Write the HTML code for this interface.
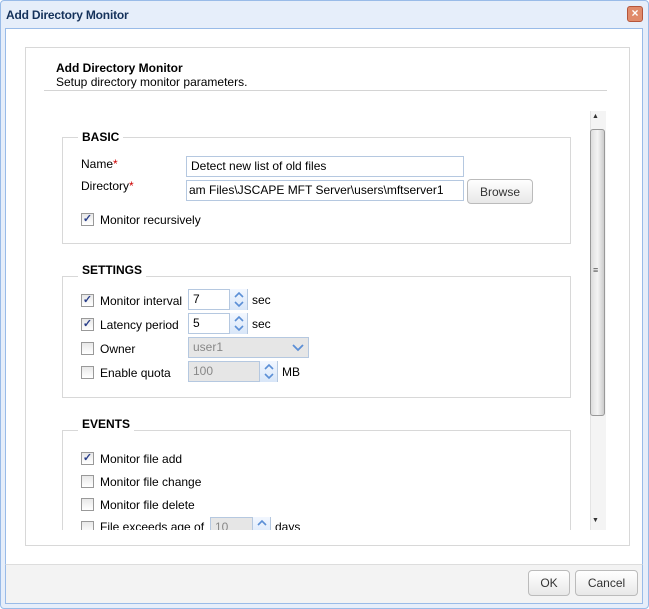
<!DOCTYPE html>
<html><head><style>
*{box-sizing:border-box;margin:0;padding:0}
body{width:649px;height:609px;font-family:"Liberation Sans",Arial,sans-serif;font-size:12px;color:#000;background:#fff;position:relative;overflow:hidden}
.win{position:absolute;left:0;top:0;width:649px;height:609px;background:#e6eefa;border:1px solid #99bbe8;border-radius:4px}
.title{position:absolute;left:6px;top:8px;font-weight:bold;font-size:12px;color:#15325b;letter-spacing:-0.2px}
.close{position:absolute;left:627px;top:6px;width:16px;height:16px;background:#e08a6a;border:1px solid #b5553a;border-radius:3px;color:#fff;font-size:12px;line-height:13px;text-align:center;font-weight:bold}
.body{position:absolute;left:5px;top:28px;width:638px;height:536px;background:#fff;border:1px solid #99bbe8;border-bottom:none}
.foot{position:absolute;left:5px;top:564px;width:638px;height:40px;background:#f3f3f3;border:1px solid #99bbe8;border-top:1px solid #ddd}
.btn{position:absolute;height:26px;border:1px solid #bbb;border-radius:4px;background:linear-gradient(#fff,#e8e8e8);text-align:center;line-height:24px;font-size:12px;color:#333}
.panel{position:absolute;left:25px;top:47px;width:605px;height:499px;border:1px solid #d8d8d8}
.abs{position:absolute}
.hline{position:absolute;left:44px;top:90px;width:563px;height:1px;background:#d4d4d4}
.fs{position:absolute;left:62px;width:509px;border:1px solid #d8d8d8}
.leg{position:absolute;background:#fff;font-weight:bold;padding:0 4px;left:78px}
.cb{position:absolute;width:13px;height:13px;border:1px solid #999;background:linear-gradient(#e8e8e8,#fff);font-size:11px;line-height:11px;text-align:center;color:#2a3f8a;font-weight:bold}
.inp{position:absolute;height:21px;border:1px solid #b5c8e0;background:#fff;padding:2px 4px;font-size:12px;white-space:nowrap;overflow:hidden}
.dis{background:#e6e6e6;color:#888}
.spin{position:absolute;width:18px;height:21px;background:linear-gradient(#f2f7ff,#d8e6f8);border-left:1px solid #b5c8e0}
.lbl{position:absolute;white-space:nowrap}
</style></head><body>
<div class="win"></div>
<div class="title">Add Directory Monitor</div>
<div class="close">×</div>
<div class="body"></div>
<div class="foot"></div>
<div class="btn" style="left:528px;top:570px;width:42px">OK</div>
<div class="btn" style="left:575px;top:570px;width:63px">Cancel</div>
<div class="panel"></div>
<div class="lbl" style="left:56px;top:61px;font-weight:bold">Add Directory Monitor</div>
<div class="lbl" style="left:56px;top:75px">Setup directory monitor parameters.</div>
<div class="hline"></div>
<div class="abs" style="left:590px;top:111px;width:16px;height:419px;background:#f4f4f4;border-left:1px solid #e4e4e4"></div>
<div class="abs" style="left:592px;top:113px;font-size:7px;color:#333">▲</div>
<div class="abs" style="left:590px;top:129px;width:15px;height:287px;border:1px solid #999;border-radius:3px;background:linear-gradient(90deg,#ddd,#f4f4f4,#ccc)"></div>
<div class="abs" style="left:593px;top:265px;font-size:9px;color:#555">≡</div>
<div class="abs" style="left:592px;top:517px;font-size:7px;color:#333">▼</div>
<div class="fs" style="top:137px;height:107px"></div>
<div class="leg" style="top:130px">BASIC</div>
<div class="lbl" style="left:81px;top:157px">Name<span style="color:#c00">*</span></div>
<div class="inp" style="left:186px;top:156px;width:278px">Detect new list of old files</div>
<div class="lbl" style="left:81px;top:179px">Directory<span style="color:#c00">*</span></div>
<div class="inp" style="left:186px;top:180px;width:278px;text-indent:-2px">am Files\JSCAPE MFT Server\users\mftserver1</div>
<div class="btn" style="left:467px;top:179px;width:66px;height:25px;color:#333">Browse</div>
<div class="cb" style="left:81px;top:213px">✓</div>
<div class="lbl" style="left:100px;top:213px">Monitor recursively</div>
<div class="fs" style="top:276px;height:122px"></div>
<div class="leg" style="top:263px">SETTINGS</div>
<div class="cb" style="left:81px;top:294px">✓</div>
<div class="lbl" style="left:100px;top:294px">Monitor interval</div>
<div class="inp" style="left:188px;top:289px;width:60px">7</div>
<div class="spin" style="left:229px;top:289px"><svg width="18" height="21"><path d="M5 8l4-4 4 4M5 13l4 4 4-4" stroke="#5b8fd6" stroke-width="1.6" fill="none"/></svg></div>
<div class="lbl" style="left:252px;top:293px">sec</div>
<div class="cb" style="left:81px;top:318px">✓</div>
<div class="lbl" style="left:100px;top:318px">Latency period</div>
<div class="inp" style="left:188px;top:313px;width:60px">5</div>
<div class="spin" style="left:229px;top:313px"><svg width="18" height="21"><path d="M5 8l4-4 4 4M5 13l4 4 4-4" stroke="#5b8fd6" stroke-width="1.6" fill="none"/></svg></div>
<div class="lbl" style="left:252px;top:317px">sec</div>
<div class="cb" style="left:81px;top:342px"></div>
<div class="lbl" style="left:100px;top:342px">Owner</div>
<div class="inp dis" style="left:188px;top:337px;width:121px">user1</div>
<div class="abs" style="left:289px;top:338px"><svg width="18" height="20"><path d="M4 7l5 5 5-5" stroke="#5b8fd6" stroke-width="1.8" fill="none"/></svg></div>
<div class="cb" style="left:81px;top:366px"></div>
<div class="lbl" style="left:100px;top:366px">Enable quota</div>
<div class="inp dis" style="left:188px;top:361px;width:90px">100</div>
<div class="spin" style="left:259px;top:361px"><svg width="18" height="21"><path d="M5 8l4-4 4 4M5 13l4 4 4-4" stroke="#5b8fd6" stroke-width="1.6" fill="none"/></svg></div>
<div class="lbl" style="left:282px;top:365px">MB</div>
<div class="fs" style="top:430px;height:100px;border-bottom:none"></div>
<div class="leg" style="top:417px">EVENTS</div>
<div class="cb" style="left:81px;top:452px">✓</div>
<div class="lbl" style="left:100px;top:452px">Monitor file add</div>
<div class="cb" style="left:81px;top:475px"></div>
<div class="lbl" style="left:100px;top:475px">Monitor file change</div>
<div class="cb" style="left:81px;top:498px"></div>
<div class="lbl" style="left:100px;top:498px">Monitor file delete</div>
<div class="abs" style="left:62px;top:516px;width:520px;height:14px;overflow:hidden">
<div class="cb" style="left:19px;top:5px"></div>
<div class="lbl" style="left:38px;top:4px">File exceeds age of</div>
<div class="inp dis" style="left:148px;top:1px;width:61px">10</div>
<div class="spin" style="left:190px;top:1px"><svg width="18" height="21"><path d="M5 8l4-4 4 4" stroke="#5b8fd6" stroke-width="1.6" fill="none"/></svg></div>
<div class="lbl" style="left:213px;top:4px">days</div>
</div>
</body></html>
